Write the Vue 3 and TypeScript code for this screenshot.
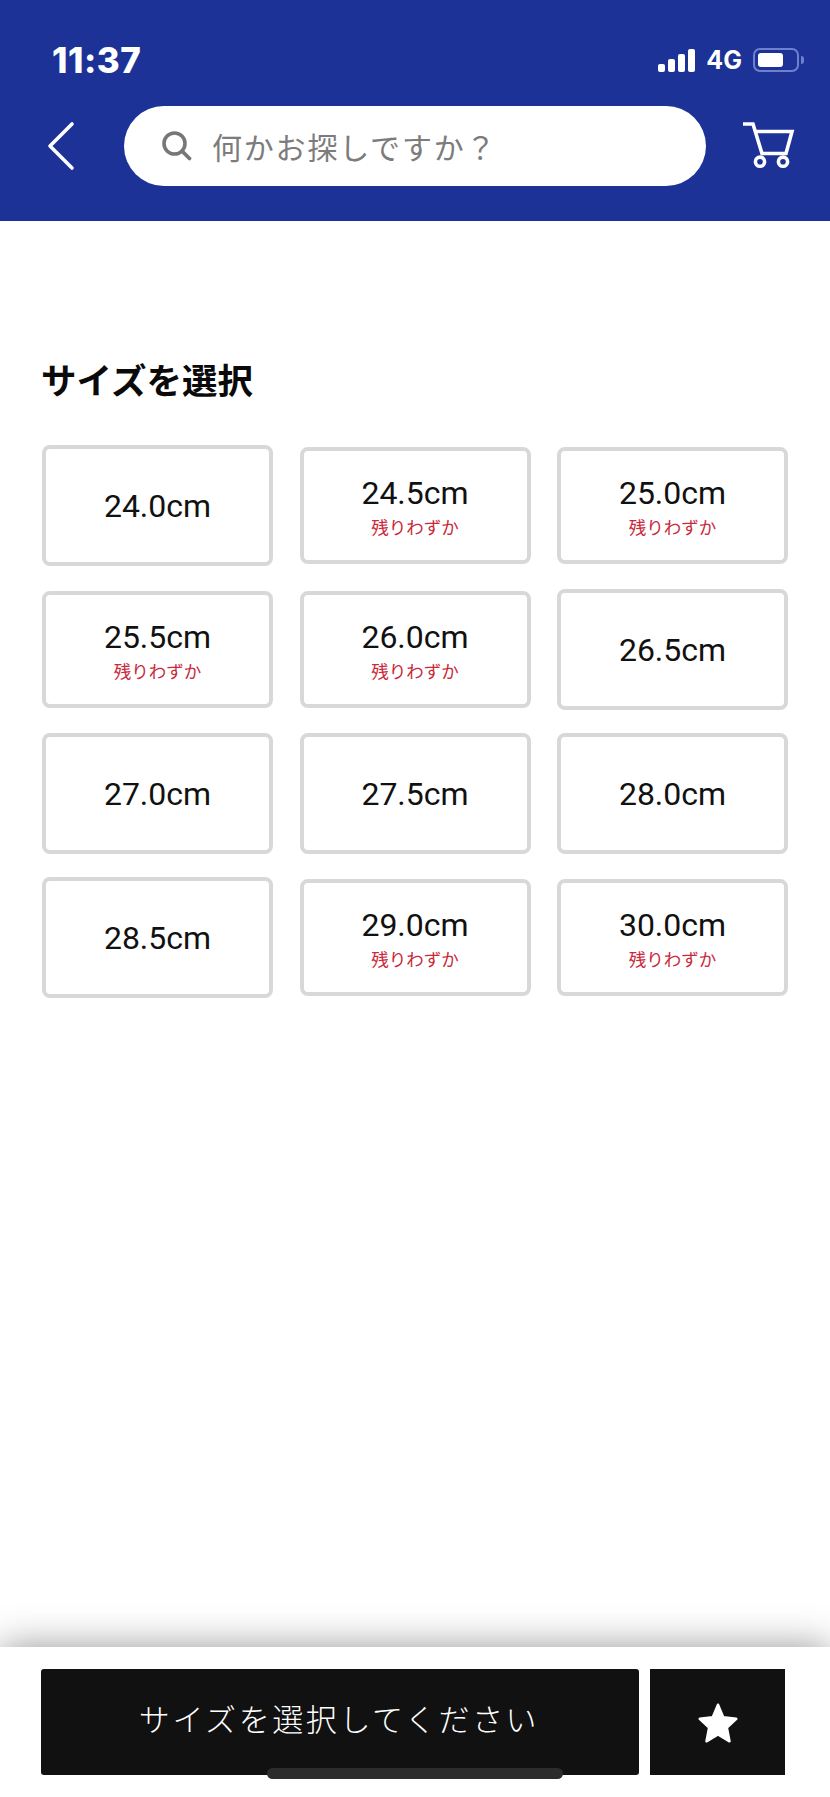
<script setup lang="ts">
interface SizeOption {
  label: string
  lowStock: boolean
}

const sizes: SizeOption[] = [
  { label: '24.0cm', lowStock: false },
  { label: '24.5cm', lowStock: true },
  { label: '25.0cm', lowStock: true },
  { label: '25.5cm', lowStock: true },
  { label: '26.0cm', lowStock: true },
  { label: '26.5cm', lowStock: false },
  { label: '27.0cm', lowStock: false },
  { label: '27.5cm', lowStock: false },
  { label: '28.0cm', lowStock: false },
  { label: '28.5cm', lowStock: false },
  { label: '29.0cm', lowStock: true },
  { label: '30.0cm', lowStock: true }
]

const signalBars = [8, 13, 18, 23]
</script>

<template>
  <div class="page">
    <header class="header">
      <div class="status">
        <span class="time">11:37</span>
        <div class="status-right">
          <div class="signal">
            <i v-for="h in signalBars" :key="h" class="bar" :style="{ height: h + 'px' }" />
          </div>
          <span class="network">4G</span>
          <div class="battery"><i class="battery-fill" /></div>
          <i class="battery-nub" />
        </div>
      </div>
      <div class="nav">
        <svg class="back" width="32" height="50" viewBox="0 0 32 50" fill="none">
          <path d="M27 3 L5 25 L27 47" stroke="#fff" stroke-width="3.6" stroke-linecap="round" stroke-linejoin="round" />
        </svg>
        <div class="search">
          <svg width="32" height="32" viewBox="0 0 32 32" fill="none">
            <circle cx="13.5" cy="13.5" r="10.5" stroke="#777" stroke-width="3.6" />
            <path d="M21.5 21.5 L28.5 28.5" stroke="#777" stroke-width="3.8" stroke-linecap="round" />
          </svg>
          <span class="placeholder">何かお探しですか？</span>
        </div>
        <svg class="cart" width="56" height="56" viewBox="0 0 56 56" fill="none">
          <path d="M3 6 H13 L22 35.5 H46 L52 13.5 H15" stroke="#fff" stroke-width="3.6" stroke-linejoin="miter" />
          <circle cx="20" cy="43.7" r="4.6" stroke="#fff" stroke-width="3.6" />
          <circle cx="43" cy="43.7" r="4.6" stroke="#fff" stroke-width="3.6" />
        </svg>
      </div>
    </header>

    <main class="content">
      <h2 class="title">サイズを選択</h2>
      <div class="size-grid">
        <button
          v-for="size in sizes"
          :key="size.label"
          class="size"
          :class="{ low: size.lowStock }"
        >
          <span class="size-label">{{ size.label }}</span>
          <span v-if="size.lowStock" class="size-note">残りわずか</span>
        </button>
      </div>
    </main>

    <footer class="footer">
      <button class="submit">サイズを選択してください</button>
      <button class="favorite">
        <svg width="46" height="46" viewBox="0 0 44 44">
          <path
            d="M22 4.5 L27 16.5 L39.5 18 L30.5 26.5 L33 39.5 L22 33 L11 39.5 L13.5 26.5 L4.5 18 L17 16.5 Z"
            fill="#fff"
            stroke="#fff"
            stroke-width="2.4"
            stroke-linejoin="round"
          />
        </svg>
      </button>
      <i class="home-indicator" />
    </footer>
  </div>
</template>

<style scoped>
.page {
  width: 830px;
  min-height: 1797px;
  display: flex;
  flex-direction: column;
  background: #fff;
  color: #111;
  font-family: Roboto, "Noto Sans CJK JP", sans-serif;
}

.header {
  height: 221px;
  box-sizing: border-box;
  padding: 44px 26px 0 0;
  background: #1d3297;
  color: #fff;
}

.status {
  height: 32px;
  display: flex;
  align-items: center;
  justify-content: space-between;
  padding-left: 52px;
}

.time {
  font-family: Inter, sans-serif;
  font-size: 35px;
  font-weight: 800;
  letter-spacing: 0.5px;
}

.status-right {
  display: flex;
  align-items: center;
}

.signal {
  display: flex;
  align-items: flex-end;
  gap: 3px;
  height: 24px;
}

.bar {
  width: 7px;
  border-radius: 2px;
  background: #fff;
}

.network {
  margin-left: 11px;
  font-family: Inter, sans-serif;
  font-size: 25px;
  font-weight: 700;
}

.battery {
  margin-left: 11px;
  width: 46px;
  height: 24px;
  box-sizing: border-box;
  padding: 3px;
  border: 2px solid #6f80cc;
  border-radius: 7px;
}

.battery-fill {
  display: block;
  width: 25px;
  height: 14px;
  border-radius: 3px;
  background: #fff;
}

.battery-nub {
  width: 3px;
  height: 8px;
  margin-left: 2px;
  border-radius: 0 3px 3px 0;
  background: #6f80cc;
}

.nav {
  margin-top: 30px;
  height: 80px;
  display: flex;
  align-items: center;
}

.back {
  margin-left: 45px;
  width: 32px;
}

.search {
  margin-left: 47px;
  width: 582px;
  height: 80px;
  box-sizing: border-box;
  padding-left: 37px;
  display: flex;
  align-items: center;
  gap: 19px;
  border-radius: 40px;
  background: #fff;
}

.placeholder {
  color: #7c7c7c;
  font-family: "Noto Sans CJK JP", sans-serif;
  font-size: 30px;
  letter-spacing: 1.8px;
}

.cart {
  margin-left: 34px;
}

.content {
  flex: 1;
  padding: 136px 42px 0;
}

.title {
  margin: 0 0 0 -1px;
  font-family: "Noto Sans CJK JP", sans-serif;
  font-size: 35.5px;
  line-height: 44px;
  font-weight: 700;
  color: #0a0a0a;
}

.size-grid {
  margin-top: 44px;
  display: grid;
  grid-template-columns: repeat(3, 1fr);
  grid-auto-rows: 121px;
  column-gap: 26.5px;
  row-gap: 23px;
  align-items: center;
}

.size {
  height: 121px;
  padding: 0;
  display: flex;
  flex-direction: column;
  align-items: center;
  justify-content: center;
  border: 4px solid #d8d8d8;
  border-radius: 8px;
  background: #fff;
  color: #111;
  font-family: inherit;
}

.size.low {
  height: 117px;
}

.size-label {
  font-size: 32px;
  line-height: 38px;
}

.size-note {
  margin-top: 4px;
  color: #c92a3c;
  font-family: "Noto Sans CJK JP", sans-serif;
  font-size: 17.5px;
  line-height: 22px;
}

.footer {
  position: relative;
  height: 150px;
  box-sizing: border-box;
  padding: 22px 0 0 41px;
  display: flex;
  gap: 11px;
  background: #fff;
  box-shadow: 0 0 36px rgba(0, 0, 0, 0.42);
}

.submit,
.favorite {
  height: 106px;
  padding: 0;
  border: 0;
  background: #111;
  color: #fff;
}

.submit {
  width: 598px;
  padding-bottom: 10px;
  border-radius: 3px;
  font-family: "Noto Sans CJK JP", sans-serif;
  font-size: 31px;
  font-weight: 300;
  letter-spacing: 2.6px;
  text-indent: -2px;
}

.favorite {
  width: 135px;
  display: flex;
  align-items: center;
  justify-content: center;
  padding-top: 2px;
}

.home-indicator {
  position: absolute;
  left: 267px;
  top: 121px;
  width: 296px;
  height: 11px;
  border-radius: 6px;
  background: #2c2c2c;
}
</style>
